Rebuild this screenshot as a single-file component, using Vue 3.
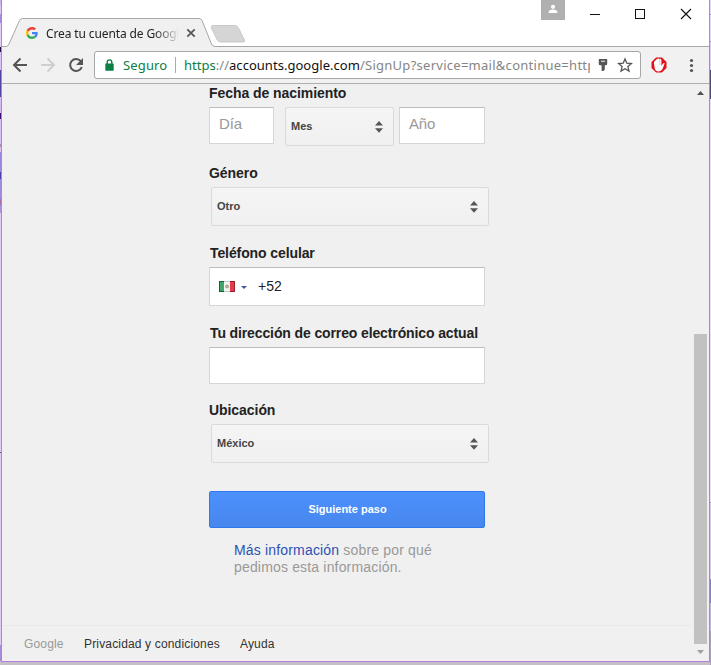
<script setup>
const strip = [
  [0, 5, '#c9b3ee'], [5, 9, '#d8c8f4'], [14, 9, '#a98add'], [23, 24, '#e0d0f8'],
  [47, 5, '#1d0b4a'], [52, 18, '#d9c2f8'], [70, 27, '#5540a8'], [97, 16, '#d7b9f3'],
  [113, 6, '#3b0a78'], [119, 25, '#d9bdf5'], [144, 3, '#b088c0'], [147, 5, '#dcc2f6'],
  [152, 20, '#9d86e2'], [172, 7, '#4a3fae'], [179, 20, '#a08ae0'], [199, 6, '#a36fa6'],
  [205, 8, '#a893e0'], [213, 239, '#e3cbfa'], [452, 1, '#6a3f9a'],
  [453, 192, '#decdf8'], [645, 16, '#a98ddb'], [661, 4, '#c9c2cc'],
]
const rightStrip = [
  [0, 14, '#e6d8f8'], [14, 1, '#a88cd8'], [15, 26, '#e6d8f8'], [41, 1, '#a88cd8'],
  [42, 28, '#dccbf3'], [70, 29, '#51467e'], [99, 403, '#eadcf7'], [502, 1, '#a590b8'],
  [503, 76, '#d6c6ea'], [579, 24, '#8c7bc8'], [603, 28, '#c3b6e2'], [631, 34, '#aaa0bd'],
]
</script>

<template>
  <div class="desktop">
    <div class="strip">
      <i v-for="s in strip" :key="s[0]" :style="{ height: s[1] + 'px', background: s[2] }"></i>
    </div>
    <div class="window">
      <header class="titlebar">
        <svg class="tabshape" width="707" height="47" viewBox="2 0 707 47">
          <path d="M2 46.5H6Q8 46.5 9 44L19.500 20.500Q20.500 18.500 22.500 18.500H199Q201 18.500 202 20.500L211.500 44Q212.500 46.500 215 46.500V47H2Z" fill="#f0f0f0" />
          <path d="M2 46.5H6Q8 46.5 9 44L19.500 20.500Q20.500 18.500 22.500 18.500H199Q201 18.500 202 20.500L211.500 44Q212.500 46.500 215 46.500H709" fill="none" stroke="#a7a7a7" />
          <path d="M213 25.500H235Q237.500 25.500 238.500 28L244.500 40Q245.500 42 243 42H220.500Q218 42 217 39.500L211.500 28Q210.500 25.500 213 25.500Z" fill="#d5d5d5" stroke="#c0c0c0" stroke-width=".8" />
        </svg>
        <div class="tab">
          <svg width="12" height="12" viewBox="0 0 48 48">
            <path fill="#EA4335" d="M24 9.500c3.540 0 6.710 1.220 9.210 3.600l6.850-6.850C35.900 2.380 30.470 0 24 0 14.620 0 6.510 5.380 2.560 13.220l7.980 6.190C12.430 13.720 17.740 9.500 24 9.500z" />
            <path fill="#4285F4" d="M46.980 24.550c0-1.570-.15-3.090-.38-4.550H24v9.020h12.940c-.58 2.960-2.260 5.480-4.780 7.180l7.730 6c4.510-4.180 7.090-10.360 7.090-17.650z" />
            <path fill="#FBBC05" d="M10.530 28.590c-.48-1.450-.76-2.990-.76-4.590s.27-3.140.76-4.590l-7.980-6.190C.92 16.460 0 20.120 0 24s.92 7.540 2.560 10.780z" />
            <path fill="#34A853" d="M24 48c6.480 0 11.930-2.130 15.890-5.810l-7.730-6c-2.150 1.450-4.920 2.300-8.160 2.300-6.260 0-11.570-4.220-13.470-9.910l-7.980 6.190C6.510 42.620 14.620 48 24 48z" />
          </svg>
          <span class="tabtitle">Crea tu cuenta de Google</span>
          <svg width="10" height="10" viewBox="0 0 10 10"><path d="M1.300 1.300L8.700 8.700M8.700 1.300L1.300 8.700" stroke="#555" stroke-width="1.700" /></svg>
        </div>
        <div class="controls">
          <span class="user">
            <svg width="24" height="20" viewBox="0 0 24 20"><circle cx="12" cy="6.800" r="2.100" fill="#fff" /><path d="M7.700 13V11.700Q8.500 9.600 12 9.600T16.300 11.700V13Z" fill="#fff" /></svg>
          </span>
          <svg width="112" height="24" viewBox="588 2 112 24" fill="none" stroke="#111">
            <path d="M590 14.500H600M635.500 9.500H644.500V18.500H635.500Z" shape-rendering="crispEdges" />
            <path d="M681 9L691 19M691 9L681 19" stroke-width="1.150" />
          </svg>
        </div>
      </header>

      <div class="toolbar">
        <svg class="nav" width="90" height="36" viewBox="2 47 90 36" fill="none" stroke-width="2">
          <path d="M27 65H14M20.500 58.500L14 65L20.500 71.500" stroke="#555" />
          <path d="M41 65H54M47.500 58.500L54 65L47.500 71.500" stroke="#cfcfcf" />
          <path d="M80.800 61.200A6 6 0 1 0 81.800 67" stroke="#555" />
          <path d="M83 58V65H76Z" fill="#555" />
        </svg>
        <div class="omnibox">
          <svg class="lock" width="9" height="12" viewBox="0 0 9 12"><path d="M2.200 5V3.200A2.300 2.300 0 0 1 6.800 3.200V5" fill="none" stroke="#0b8043" stroke-width="1.400" /><rect x=".3" y="4.400" width="8.400" height="7.300" rx=".6" fill="#0b8043" /></svg>
          <span class="secure">Seguro</span>
          <span class="divider"></span>
          <span class="url"><span class="green">https</span><span class="grey">://</span><span class="host">accounts.google.com</span><span class="grey path">/SignUp?service=mail&amp;continue=http</span></span>
          <svg class="marks" width="44" height="20" viewBox="594 55 44 20">
            <path d="M600.300 59H607.700Q608.200 59 608.200 59.500V64Q608.200 65.300 606.800 65.300H605.800V69.500L604.500 71H602.600V65.300H601.200Q599.800 65.300 599.800 64V59.500Q599.800 59 600.300 59Z" fill="#555" />
            <path d="M602 61.300H606" stroke="#ddd" stroke-width="1.200" />
            <path d="M626 59L627.800 63.200L632.400 63.600L628.900 66.600L630 71.100L626 68.700L622 71.100L623.100 66.600L619.600 63.600L624.200 63.200Z" fill="none" stroke="#555" stroke-width="1.300" />
          </svg>
        </div>
        <svg class="ext" width="62" height="36" viewBox="641 47 62 36">
          <path d="M656.100 57.500H661.900L666.500 62V68L661.900 72.500H656.100L651.500 68V62Z" fill="#e0131b" />
          <path d="M655.400 60.500Q656 59.300 657.400 59.100V58.700Q658.500 58 659.500 59Q661 58.300 661.400 60.200V66L663 63.600Q664.300 62.400 664.600 63.600L662.500 69Q661.300 71.400 658.700 71.400Q655.500 71.400 654.700 68.200L653.900 63Q654 61.300 655.400 60.500Z" fill="#fff" />
          <path d="M659.800 59V65" stroke="#e99" stroke-width=".6" />
          <g fill="#555"><circle cx="691.500" cy="60.500" r="1.600" /><circle cx="691.500" cy="65.500" r="1.600" /><circle cx="691.500" cy="70.500" r="1.600" /></g>
        </svg>
      </div>

      <div class="viewport">
        <main class="page">
          <form class="form" @submit.prevent>
            <label class="l1">Fecha de nacimiento</label>
            <div class="row">
              <div class="input day">Día</div>
              <div class="select month"><span>Mes</span><svg width="8" height="12" viewBox="0 0 8 12"><path d="M0 4.500L4 0L8 4.500ZM0 7.200H8L4 11.700Z" fill="#555" /></svg></div>
              <div class="input year">Año</div>
            </div>
            <label class="l2">Género</label>
            <div class="select wide"><span>Otro</span><svg width="8" height="12" viewBox="0 0 8 12"><path d="M0 4.500L4 0L8 4.500ZM0 7.200H8L4 11.700Z" fill="#555" /></svg></div>
            <label class="l3">Teléfono celular</label>
            <div class="input phone">
              <svg width="16" height="11" viewBox="0 0 16 11">
                <rect width="16" height="11" fill="#f4f4f2" /><rect width="5" height="11" fill="#43a56c" /><rect x="11" width="5" height="11" fill="#e33b48" />
                <path d="M0 .5H5M0 10.500H5M.5 0V11" stroke="#17613a" /><path d="M11 .5H16M11 10.500H16M15.500 0V11" stroke="#9d1f2b" /><path d="M5 .5H11M5 10.500H11" stroke="#c9c9c4" />
                <circle cx="8" cy="5.500" r="1.500" fill="#c5b9a0" stroke="#8d8b71" stroke-width=".7" />
              </svg>
              <svg class="caret" width="6" height="3" viewBox="0 0 6 3"><path d="M0 0H6L3 3Z" fill="#3c5a99" /></svg>
              <span>+52</span>
            </div>
            <label class="l4">Tu dirección de correo electrónico actual</label>
            <div class="input mail"></div>
            <label class="l5">Ubicación</label>
            <div class="select wide"><span>México</span><svg width="8" height="12" viewBox="0 0 8 12"><path d="M0 4.500L4 0L8 4.500ZM0 7.200H8L4 11.700Z" fill="#555" /></svg></div>
            <button class="submit">Siguiente paso</button>
            <p class="note"><a>Más información</a> sobre por qué<br />pedimos esta información.</p>
          </form>
          <footer class="footer"><span class="brand">Google</span><span class="privacy">Privacidad y condiciones</span><span>Ayuda</span></footer>
        </main>
        <aside class="scrollbar">
          <svg width="7" height="4" viewBox="0 0 7 4"><path d="M0 4L3.500 0L7 4Z" fill="#505050" /></svg>
          <div class="thumb"></div>
          <svg class="down" width="7" height="4" viewBox="0 0 7 4"><path d="M0 0H7L3.500 4Z" fill="#a0a0a0" /></svg>
        </aside>
      </div>
    </div>
    <div class="strip">
      <i v-for="s in rightStrip" :key="s[0]" :style="{ height: s[1] + 'px', background: s[2] }"></i>
    </div>
  </div>
</template>

<style>
body { margin: 0; overflow: hidden; }
</style>

<style scoped>
* { box-sizing: border-box; }
svg { display: block; flex: none; }
.desktop { width: 711px; height: 665px; display: grid; grid-template-columns: 1px 709px 1px; background: #c4c0c6; font-family: "Liberation Sans", Arial, sans-serif; color: #222; overflow: hidden; }
.strip { display: flex; flex-direction: column; }
.strip i { display: block; flex: none; }
.window { height: 662px; border: 1px solid #b57fdc; border-top: 0; background: #f0f0f0; display: flex; flex-direction: column; overflow: hidden; }
.titlebar { position: relative; height: 47px; flex: none; background: #fff; display: flex; justify-content: space-between; }
.tabshape { position: absolute; left: 0; top: 0; }
.tab { position: relative; display: flex; align-items: center; height: 28px; margin: 19px 0 0 24px; font-family: "Noto Sans", sans-serif; }
.tabtitle { width: 132px; margin: 0 8px 0 8px; overflow: hidden; white-space: nowrap; font-size: 12px; letter-spacing: -.12px; color: #222; -webkit-mask-image: linear-gradient(90deg, #000 108px, transparent 134px); mask-image: linear-gradient(90deg, #000 108px, transparent 134px); }
.controls { position: relative; display: flex; margin-right: 9px; gap: 23px; }
.controls > svg { margin-top: 2px; }
.user { width: 24px; height: 20px; background: #b0b0b0; }
.toolbar { height: 37px; flex: none; display: flex; border-bottom: 1px solid #aeaeae; background: #f1f1f1; }
.omnibox { display: flex; align-items: center; width: 547px; height: 28px; margin: 4px 0 0 2px; padding-left: 10px; border: 1px solid #a6a6a6; border-radius: 3px; background: #fff; font: 13px "Noto Sans", sans-serif; white-space: nowrap; }
.secure { width: 52px; padding-left: 9px; color: #0b8043; letter-spacing: .15px; }
.divider { width: 1px; height: 16px; margin-left: 9px; background: #aaa; }
.url { width: 406px; margin-left: 8px; overflow: hidden; letter-spacing: .03px; }
.green { color: #0b8043; }
.grey { color: #858585; }
.host { color: #111; }
.path { letter-spacing: .27px; }
.marks { margin-left: 3px; }
.viewport { display: flex; flex: 1; min-height: 0; }
.page { width: 690px; flex: none; display: flex; flex-direction: column; }
.form { width: 280px; height: 541px; flex: none; margin-left: 207px; display: flex; flex-direction: column; align-items: flex-start; }
label { height: 18px; line-height: 18px; flex: none; font-size: 14px; font-weight: bold; white-space: nowrap; margin-bottom: 5px; letter-spacing: -.06px; }
.l2 { margin-top: 18px; }
.l3 { margin-top: 18px; padding-left: 1px; letter-spacing: -.1px; }
.l4 { margin-top: 18px; padding-left: 1px; letter-spacing: -.12px; }
.l5 { margin-top: 17px; }
.row { display: flex; align-items: flex-start; }
.input { height: 37px; flex: none; border: 1px solid #d6d6d6; border-top-color: #bdbdbd; background: #fff; font-size: 15px; line-height: 32px; color: #999; padding-left: 9px; letter-spacing: -.15px; }
.day { width: 65px; }
.year { width: 86px; margin-left: 5px; }
.select { display: flex; justify-content: space-between; align-items: center; height: 39px; flex: none; border: 1px solid #dadada; border-radius: 2px; background: linear-gradient(#f5f5f5, #f0f0f0); font-size: 11px; font-weight: bold; color: #444; padding: 0 10px 0 5px; }
.select span { padding-bottom: 2px; }
.month { width: 109px; margin-left: 11px; }
.wide { width: 278px; margin-left: 2px; }
.phone { display: flex; align-items: center; width: 276px; height: 39px; font-size: 14px; color: #222; letter-spacing: 0; }
.phone span { padding-bottom: 1px; }
.caret { margin: 1px 11px 0 6px; }
.mail { width: 276px; }
.submit { width: 276px; height: 37px; flex: none; margin: 28px 0 0; padding: 0 0 2px 1px; border: 1px solid #3079ed; border-radius: 2px; background: linear-gradient(#4d90fe, #4787ed); color: #fff; font: bold 11px "Liberation Sans", Arial, sans-serif; }
.note { margin: 14px 0 0 25px; font-size: 14px; line-height: 17px; letter-spacing: .17px; color: #999; white-space: nowrap; }
.note a { color: #2d50b5; }
.footer { height: 36px; flex: none; display: flex; align-items: center; border-top: 1px solid #e9e9e9; padding-left: 22px; font-size: 12px; color: #333; letter-spacing: .16px; }
.brand { width: 60px; color: #999; }
.privacy { width: 156px; }
.scrollbar { width: 17px; display: flex; flex-direction: column; align-items: center; padding: 7px 0 0 0; }
.thumb { width: 13px; height: 310px; flex: none; margin-top: 239px; background: #c1c1c1; }
.down { margin-top: 6px; }
</style>
